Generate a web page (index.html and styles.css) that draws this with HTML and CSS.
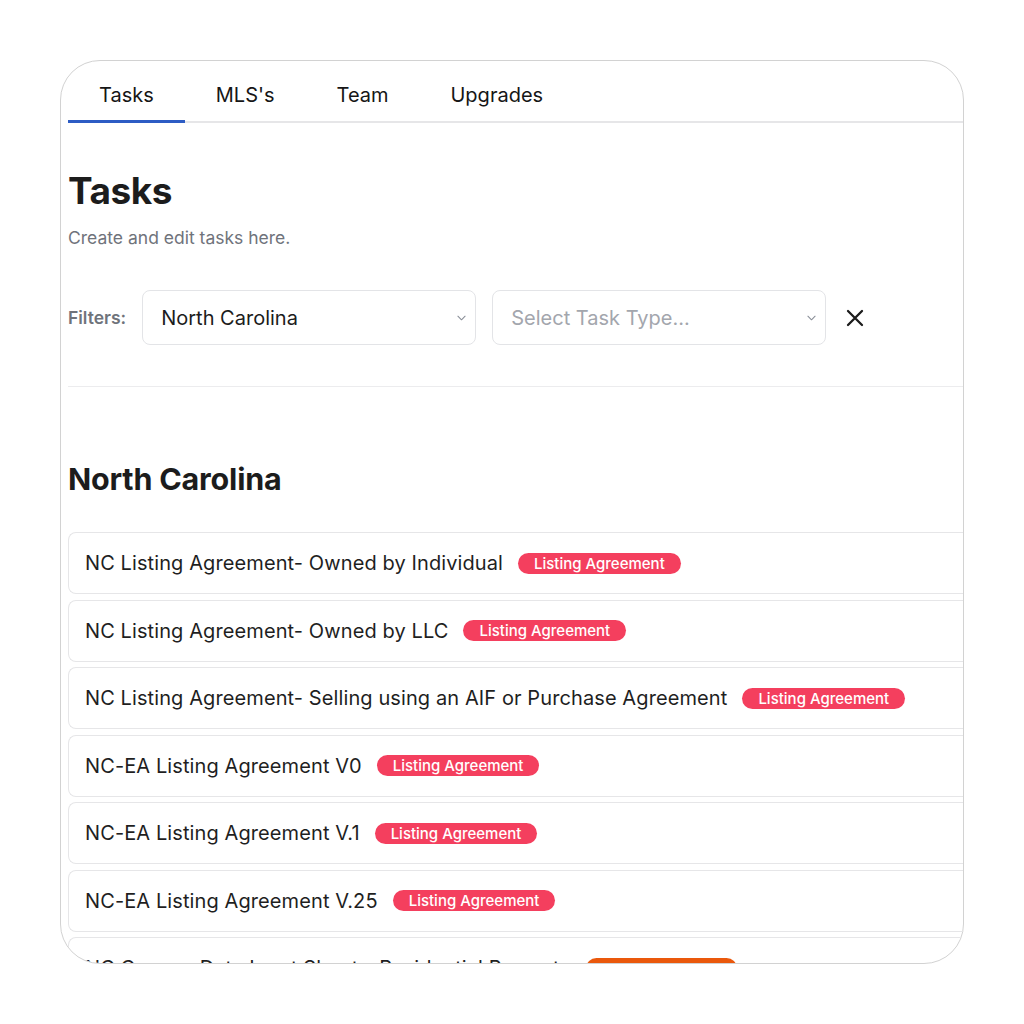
FILE: index.html
```html
<!DOCTYPE html>
<html lang="en">

<head>
    <meta charset="UTF-8">
    <meta name="viewport" content="width=device-width, initial-scale=1.0">
    <title>Tasks</title>
    <link rel="stylesheet" href="styles.css">
</head>

<body>
    <main class="frame">
        <nav class="tabs">
            <a class="tab active" href="#">Tasks</a>
            <a class="tab" href="#">MLS's</a>
            <a class="tab" href="#">Team</a>
            <a class="tab" href="#">Upgrades</a>
        </nav>

        <section class="page">
            <h1>Tasks</h1>
            <p class="subtitle">Create and edit tasks here.</p>

            <div class="filters">
                <span class="filters-label">Filters:</span>
                <div class="select">
                    <span>North Carolina</span>
                    <svg class="chevron" viewBox="0 0 10 6" width="9" height="6"><path d="M1 1l4 4 4-4" fill="none" stroke="#8a8f98" stroke-width="1.2" stroke-linecap="round" stroke-linejoin="round"/></svg>
                </div>
                <div class="select placeholder">
                    <span>Select Task Type...</span>
                    <svg class="chevron" viewBox="0 0 10 6" width="9" height="6"><path d="M1 1l4 4 4-4" fill="none" stroke="#8a8f98" stroke-width="1.2" stroke-linecap="round" stroke-linejoin="round"/></svg>
                </div>
                <button class="clear" type="button">
                    <svg viewBox="0 0 18 18" width="18" height="18"><path d="M2 2l14 14M16 2L2 16" stroke="#1c1c1c" stroke-width="2.3" stroke-linecap="round"/></svg>
                </button>
            </div>

            <hr class="divider">

            <h2>North Carolina</h2>

            <ul class="task-list">
                <li class="task">NC Listing Agreement- Owned by Individual <span class="badge">Listing Agreement</span></li>
                <li class="task">NC Listing Agreement- Owned by LLC <span class="badge">Listing Agreement</span></li>
                <li class="task">NC Listing Agreement- Selling using an AIF or Purchase Agreement <span class="badge">Listing Agreement</span></li>
                <li class="task">NC-EA Listing Agreement V0 <span class="badge">Listing Agreement</span></li>
                <li class="task">NC-EA Listing Agreement V.1 <span class="badge">Listing Agreement</span></li>
                <li class="task">NC-EA Listing Agreement V.25 <span class="badge">Listing Agreement</span></li>
                <li class="task">NC Canopy Data Input Sheet - Residential Property <span class="badge orange">Data Input Sheet</span></li>
            </ul>
        </section>
    </main>
</body>

</html>
```

FILE: styles.css
```css
* {
    margin: 0;
    padding: 0;
    box-sizing: border-box;
}

html {
    background-color: #ffffff;
    color: #1c1c1c;
    font-family: 'Inter', 'Liberation Sans', sans-serif;
}

body {
    padding: 60px 0 0 60px;
}

.frame {
    width: 904px;
    height: 904px;
    border: 1px solid #d2d2d2;
    border-radius: 40px;
    overflow: hidden;
    padding-left: 7px;
}

/* top navigation */
.tabs {
    display: flex;
    border-bottom: 2px solid #e6e6e8;
}

.tab {
    padding: 22px 31px 13px;
    font-size: 20px;
    line-height: 24px;
    color: #161616;
    text-decoration: none;
    border-bottom: 3px solid transparent;
    margin-bottom: -2px;
}

.tab.active {
    border-bottom-color: #2d5cc4;
}

.page {
    padding-top: 45px;
}

h1 {
    font-size: 37px;
    line-height: 46px;
    font-weight: 700;
    letter-spacing: -0.5px;
}

.subtitle {
    margin-top: 12px;
    font-size: 17.5px;
    line-height: 24px;
    color: #6f737b;
}

/* filter bar */
.filters {
    display: flex;
    align-items: center;
    margin-top: 40px;
}

.filters-label {
    font-size: 17.5px;
    font-weight: 600;
    color: #6f737b;
    margin-right: 16px;
}

.select {
    display: flex;
    align-items: center;
    justify-content: space-between;
    width: 334px;
    height: 55px;
    padding: 0 9px 0 18px;
    border: 1px solid #e3e4e7;
    border-radius: 8px;
    font-size: 20px;
    margin-right: 16px;
}

.select.placeholder {
    color: #a3a6ad;
}

.clear {
    display: flex;
    background: none;
    border: none;
    padding: 4px;
    cursor: pointer;
}

.divider {
    border: none;
    border-top: 1px solid #ececee;
    margin-top: 41px;
}

h2 {
    margin-top: 74px;
    font-size: 30.5px;
    line-height: 36px;
    font-weight: 700;
    letter-spacing: -0.2px;
}

/* task rows */
.task-list {
    list-style: none;
    margin-top: 35px;
    display: flex;
    flex-direction: column;
    gap: 5.5px;
}

.task {
    display: flex;
    align-items: center;
    height: 62px;
    padding: 0 16px;
    border: 1px solid #e6e6e8;
    border-right: none;
    border-radius: 8px 0 0 8px;
    font-size: 20px;
    letter-spacing: 0.1px;
    color: #1f1f1f;
    white-space: nowrap;
}

.badge {
    margin-left: 15px;
    padding: 0 16px;
    height: 21px;
    line-height: 21px;
    border-radius: 11px;
    background-color: #f43f5e;
    color: #ffffff;
    font-size: 15px;
    font-weight: 500;
    letter-spacing: 0;
}

.badge.orange {
    background-color: #ea580c;
}
```
